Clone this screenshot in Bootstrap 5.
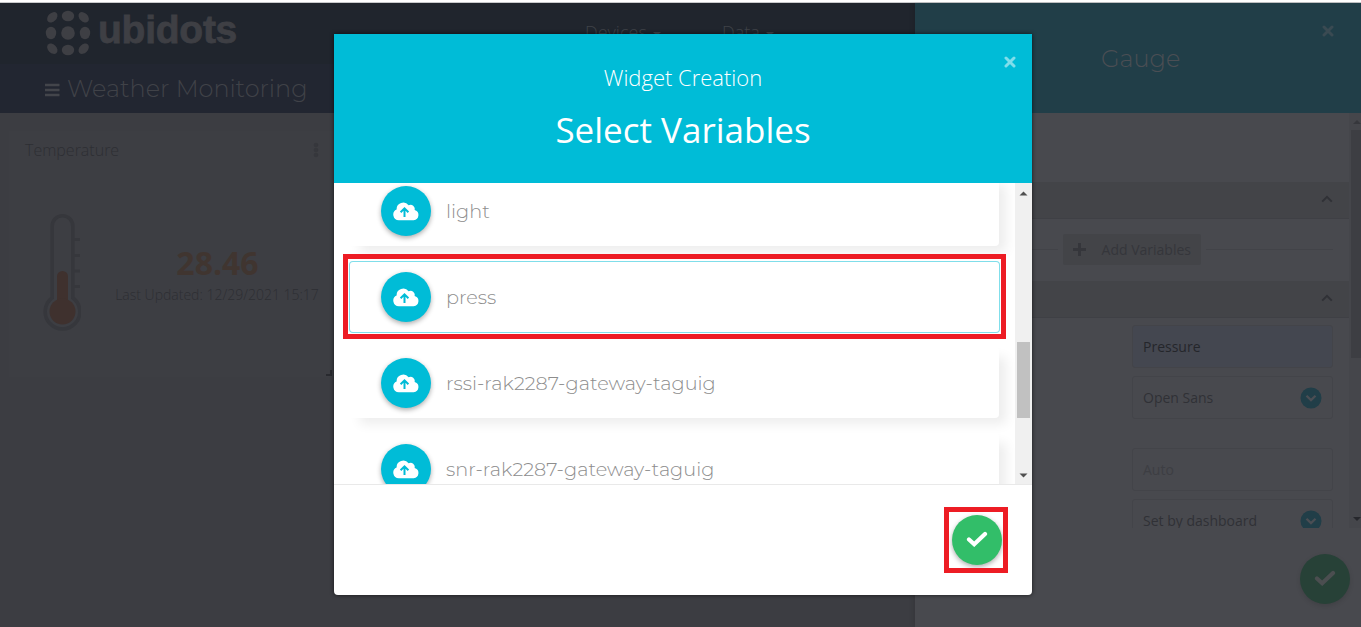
<!DOCTYPE html>
<html lang="en">
<head>
<meta charset="utf-8">
<title>Ubidots - Weather Monitoring</title>
<link href="https://cdn.jsdelivr.net/npm/bootstrap@5.3.0/dist/css/bootstrap.min.css" rel="stylesheet">
<style>
body{font-family:"Open Sans","Noto Sans",sans-serif;font-size:14px;background:#3c3d42;color:#2d2e33;height:100vh;overflow:hidden;border-top:2px solid #fff}
.geo{font-family:Montserrat,Inter,"Open Sans",sans-serif;font-weight:300}
svg{display:block;flex:none}
.shell{height:625px;border-top:1px solid #c9cacc}
.topnav{height:61px;background:#20252d;padding-left:45px;color:#3d4046}
.topnav svg{margin-top:7px}
.brand-word{font:bold 39px/54px "Liberation Sans",sans-serif;letter-spacing:-.25px;margin-left:7px;width:487px;-webkit-text-stroke:.8px #3e3f44;color:#3e3f44}
.menu-item{font-size:18px;line-height:58px;font-weight:300;width:137px;color:#3f4248}
.caret{display:inline-block;border:4px solid transparent;border-top-color:#3f4248;border-bottom:0;vertical-align:3px;margin-left:6px}
.dash-title{height:49px;background:#222631;color:#404248;padding-left:45px;font-size:24px;line-height:49px;white-space:nowrap}
.dash-title svg{margin-right:7px;margin-top:2px}
.widget{width:326px;height:246px;margin:18px 0 0 9px;background:#3d3e43}
.widget-head{height:38px;padding:0 16px 0 16px;font-size:16px;font-weight:300}
.reading{width:206px;margin-left:33px;font-size:14px;line-height:20px;font-weight:300;padding-top:73px;white-space:nowrap}
.reading b{font-size:32px;line-height:42px;color:#403530;font-weight:700;padding-left:1px}
.reading span{display:block;padding-top:1px}
.side{width:446px;background:#48494e;box-shadow:-1px 0 5px rgba(0,0,0,.12)}
.side-head{height:110px;background:#213e48;font-size:24px;color:#4b4e54;padding:0 27px 0 0}
.side-head svg{color:#3a4a52}
.side-head .geo{flex:1;padding-left:186px;line-height:111px}
.side-body{height:415px;overflow:hidden}
.side-scroll{width:12px;background:#45464b;padding-left:2px}
.side-scroll i{display:block;height:228px;background:#3d3e43}
.sect{height:37px;background:#434448;border-bottom:1px solid #3f4045;padding:0 16px 2px 0}
.add-row{height:62px;padding:0 16px 1px;gap:5px}
.add-row hr{margin:0;flex:1;border-color:#424348;opacity:1}
.add-row .tail{flex:0 0 127px}
.add-btn{width:138px;height:31px;background:#434448;border-radius:2px;font-size:14px;padding:0 10px;color:#35363b;line-height:31px;white-space:nowrap}
.fieldbox{width:201px;height:43px;border:1px solid #434449;border-radius:3px;padding:0 10px;color:#303136}
.side-foot{height:97px;padding:26px 11px 0 0}
.round{width:50px;height:50px;border-radius:50%;flex:none;display:flex;align-items:center;justify-content:center;box-shadow:0 2px 5px rgba(0,0,0,.32)}
.side-foot .round{box-shadow:0 2px 5px rgba(0,0,0,.12)}
.dlg{position:absolute;left:334px;top:34px;width:698px;height:561px;background:#fff;border-radius:0 0 4px 4px;box-shadow:0 0 4px rgba(0,0,0,.65);overflow:hidden}
.dlg-head{height:149px;background:#00bcd7;color:#fff;text-align:center;position:relative}
.dlg-sub{font-size:22px;font-weight:300;line-height:30px;padding-top:28px}
.dlg-main{font-size:35px;line-height:50px;padding-top:13px}
.dlg-x{position:absolute;right:16px;top:22px}
.dlg-body{height:302px;border-bottom:1px solid #e9e9e9}
.items{flex:1;overflow:hidden;padding:0 15px;background:#fff}
.items>div{height:71px;width:650px;margin-bottom:15px;padding:1px 0 0 32px;background:#fff;border-radius:4px;box-shadow:9px 8px 12px -2px rgba(0,0,0,.075);color:#8d8d8d;font-size:19.280px;position:relative;gap:15px}
.items>div>b{font-weight:300;padding-top:1px}
.items>div:first-child{margin-top:-8px}
.items .chosen{height:72px;width:651px;margin-bottom:14px;padding-top:0;box-shadow:inset 0 0 0 1px #80deea}
.mark-box{position:absolute;border:5px solid #ed1c24}
.chosen .mark-box{inset:-7px -6px -6px -6px}
.track{width:17px;background:#f0f0f0;padding:8px 2px 0}
.track i{display:block;height:76px;margin-top:146px;background:#c1c1c1}
.dlg-foot{height:110px;padding:30px 30px 0 0}
.round .tick{margin-bottom:3px}
.hit{position:relative}.hit .mark-box{inset:-8px -6px -8px -8px}
</style>
</head>
<body>
<svg width="0" height="0" class="position-absolute">
<symbol id="cross" viewBox="0 0 12 12"><path d="M2 2l8 8M10 2l-8 8" stroke="currentColor" stroke-width="3" stroke-linecap="round"/></symbol>
<symbol id="check" viewBox="0 0 22 16"><path d="M3 8.500l5.200 4.700L19 3" fill="none" stroke="currentColor" stroke-width="4.200" stroke-linecap="round"/></symbol>
<symbol id="cloud" viewBox="0 0 26 19"><path d="M5.800 18.200A5.600 5.600 0 0 1 3.600 7.500A6.700 6.700 0 0 1 15.600 3.200A4.200 4.200 0 0 1 21.600 8A5.200 5.200 0 0 1 20.600 18.200z" fill="#fff"/><path d="M11.500 15V7.200M7.600 10.200l3.900-3.900 3.900 3.900" fill="none" stroke="#00bcd7" stroke-width="2"/></symbol>
<symbol id="up" viewBox="0 0 12 8"><path d="M1.200 6.600L6 1.800l4.800 4.800" fill="none" stroke="#303136" stroke-width="2"/></symbol>
<symbol id="drop" viewBox="0 0 22 22"><circle cx="11" cy="11" r="10.500" fill="#213e48"/><path d="M6.500 8.700l4.500 4.400 4.500-4.400" fill="none" stroke="#4b4e54" stroke-width="2.300"/></symbol>
</svg>
<div class="shell d-flex">
<main class="flex-grow-1">
<nav class="topnav d-flex align-items-start">
<svg width="46" height="46" viewBox="0 0 46 46" fill="#3e3f44"><ellipse cx="23" cy="6" rx="6.200" ry="5.200"/><circle cx="23" cy="23" r="6.800"/><ellipse cx="23" cy="40" rx="6.200" ry="5.200"/><ellipse cx="6" cy="23" rx="5.200" ry="6.200"/><ellipse cx="40" cy="23" rx="5.200" ry="6.200"/><ellipse cx="7.300" cy="7.300" rx="6" ry="4.200" transform="rotate(-45 7.300 7.300)"/><ellipse cx="38.700" cy="7.300" rx="6" ry="4.200" transform="rotate(45 38.700 7.300)"/><ellipse cx="7.300" cy="38.700" rx="6" ry="4.200" transform="rotate(45 7.300 38.700)"/><ellipse cx="38.700" cy="38.700" rx="6" ry="4.200" transform="rotate(-45 38.700 38.700)"/></svg>
<span class="brand-word">ubidots</span>
<span class="menu-item">Devices<i class="caret"></i></span><span class="menu-item">Data<i class="caret"></i></span>
</nav>
<div class="dash-title geo d-flex align-items-center"><svg width="15" height="14" viewBox="0 0 15 14"><path d="M0 2h14.500M0 7h14.500M0 12h14.500" stroke="#43454b" stroke-width="2.500"/></svg><span>Weather Monitoring</span></div>
<section class="widget">
<div class="widget-head d-flex justify-content-between align-items-center"><span>Temperature</span><svg width="6" height="16" fill="#36373c"><circle cx="3" cy="3" r="2.300"/><circle cx="3" cy="8" r="2.300"/><circle cx="3" cy="13" r="2.300"/></svg></div>
<div class="d-flex">
<svg width="38" height="120" viewBox="0 0 38 120" style="margin:43px 0 0 34px"><path d="M9.200 85.800V14a10.300 10.300 0 0 1 20.600 0V85.800A17.300 17.300 0 1 1 9.200 85.800z" fill="none" stroke="#36373c" stroke-width="3.600"/><path d="M31 27.500h6M31 43.500h6M31 59h6M31 74.500h6" stroke="#36373c" stroke-width="3"/><path d="M19.500 64.500v30" stroke="#3f312e" stroke-width="11" stroke-linecap="round"/><circle cx="19.500" cy="99.500" r="13" fill="#3f312e"/></svg>
<div class="reading text-center"><b>28.46</b><span>Last Updated: 12/29/2021 15:17</span></div>
</div>
<div class="d-flex justify-content-end" style="padding-right:3px"><svg width="6" height="6" style="margin-top:38px"><path d="M5 0v5H0" fill="none" stroke="#292a2f" stroke-width="2"/></svg></div>
</section>
</main>
<aside class="side flex-shrink-0">
<div class="side-head d-flex"><span class="geo">Gauge</span><svg width="12" height="12" style="margin-top:22px"><use href="#cross"/></svg></div>
<div class="side-body d-flex">
<div class="flex-grow-1">
<div style="height:69px"></div>
<div class="sect d-flex align-items-center justify-content-end"><svg width="12" height="8"><use href="#up"/></svg></div>
<div class="add-row d-flex align-items-center"><hr><div class="add-btn d-flex align-items-center justify-content-between"><svg width="13" height="13"><path d="M6.500 0v13M0 6.500h13" stroke="#35363b" stroke-width="3"/></svg><span>Add Variables</span></div><hr class="tail"></div>
<div class="sect d-flex align-items-center justify-content-end"><svg width="12" height="8"><use href="#up"/></svg></div>
<div class="d-flex flex-column align-items-end" style="padding:7px 16px 0 0">
<div class="fieldbox d-flex align-items-center" style="background:#444750;color:#24262b">Pressure</div>
<div class="fieldbox d-flex align-items-center justify-content-between" style="margin-top:8px">Open Sans<svg width="22" height="22"><use href="#drop"/></svg></div>
<div class="fieldbox d-flex align-items-center" style="margin-top:29px;color:#3d3e43">Auto</div>
<div class="fieldbox d-flex align-items-center justify-content-between" style="margin-top:8px">Set by dashboard<svg width="22" height="22"><use href="#drop"/></svg></div>
</div>
</div>
<div class="side-scroll d-flex flex-column flex-shrink-0"><svg width="10" height="17"><path d="M2 11l4-4 4 4z" fill="#36373c"/></svg><i></i><svg class="mt-auto" width="10" height="17"><path d="M2 6l4 4 4-4z" fill="#26272c"/></svg></div>
</div>
<div class="side-foot d-flex justify-content-end"><div class="round" style="background:#274137;color:#4b4e50"><svg class="tick" width="22" height="16"><use href="#check"/></svg></div></div>
</aside>
</div>
<div class="dlg" role="dialog">
<header class="dlg-head"><div class="dlg-sub">Widget Creation</div><div class="dlg-main">Select Variables</div><svg class="dlg-x" width="12" height="12" style="color:#80deeb"><use href="#cross"/></svg></header>
<div class="dlg-body d-flex">
<div class="items geo">
<div class="d-flex align-items-center"><span class="round" style="background:#00bcd7"><svg width="26" height="19"><use href="#cloud"/></svg></span><b>light</b></div>
<div class="chosen d-flex align-items-center"><span class="round" style="background:#00bcd7"><svg width="26" height="19"><use href="#cloud"/></svg></span><b>press</b><i class="mark-box"></i></div>
<div class="d-flex align-items-center"><span class="round" style="background:#00bcd7"><svg width="26" height="19"><use href="#cloud"/></svg></span><b>rssi-rak2287-gateway-taguig</b></div>
<div class="d-flex align-items-center"><span class="round" style="background:#00bcd7"><svg width="26" height="19"><use href="#cloud"/></svg></span><b>snr-rak2287-gateway-taguig</b></div>
</div>
<div class="track d-flex flex-column"><svg width="13" height="5"><path d="M2.500 4.500L6.500 .5l4 4z" fill="#505050"/></svg><i></i><svg width="13" height="5" style="margin-top:55px"><path d="M2.500 .5l4 4 4-4z" fill="#505050"/></svg></div>
</div>
<footer class="dlg-foot d-flex justify-content-end align-items-start"><div class="hit"><div class="round" style="background:#32be69;color:#fff"><svg class="tick" width="22" height="16"><use href="#check"/></svg></div><i class="mark-box"></i></div></footer>
</div>
<script src="https://cdn.jsdelivr.net/npm/bootstrap@5.3.0/dist/js/bootstrap.bundle.min.js"></script>
</body>
</html>
